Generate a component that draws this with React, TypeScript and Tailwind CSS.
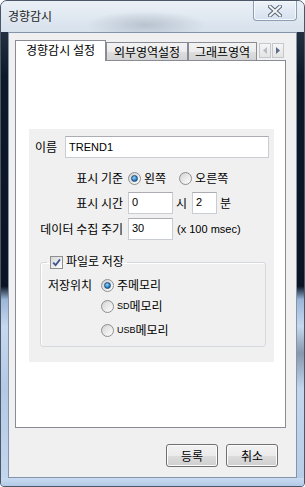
function Radio({ checked }: { checked?: boolean }) {
  return (
    <span className="flex h-[13px] w-[13px] shrink-0 items-center justify-center rounded-full border border-[#8e8f8f] bg-[linear-gradient(135deg,#cfcfcf,#ffffff)]">
      {checked ? (
        <span className="h-[7px] w-[7px] rounded-full border border-[#1d4e7c] bg-[radial-gradient(circle_at_40%_35%,#9ad6ff,#2b7fc0_60%,#15487a)]" />
      ) : (
        <span className="h-[9px] w-[9px] rounded-full bg-[linear-gradient(135deg,#d8d8d8,#fbfbfb)]" />
      )}
    </span>
  )
}

function CheckBox() {
  return (
    <span className="flex h-[13px] w-[13px] shrink-0 items-center justify-center border border-[#8e8f8f] bg-[linear-gradient(135deg,#d6d6d6,#ffffff)]">
      <svg width="9" height="9" viewBox="0 0 9 9">
        <path d="M1.2 4.6 L3.6 7.2 L8 1.4" stroke="#3e5592" strokeWidth="1.8" fill="none" />
      </svg>
    </span>
  )
}

function TextBox({ value, w, center }: { value: string; w: string; center?: boolean }) {
  return (
    <div
      className={`${w} flex h-[22px] shrink-0 border border-[#c9ccd3] border-t-[#abadb3] bg-white pl-[3px] font-['Liberation_Sans',sans-serif] text-[11px] leading-[13px] ${center ? "items-center" : "items-start pt-[3px]"}`}
    >
      {value}
    </div>
  )
}

function Tab({ label, selected, w }: { label: string; selected?: boolean; w: string }) {
  if (selected) {
    return (
      <div className={`${w} z-10 flex h-[21px] shrink-0 items-center justify-center border border-b-0 border-[#898c95] bg-white pb-[2px] text-[12px] leading-[12px]`}>
        {label}
      </div>
    )
  }
  return (
    <div className={`${w} flex h-[19px] shrink-0 items-center justify-center overflow-hidden whitespace-nowrap border border-b-0 border-[#898c95] bg-[linear-gradient(to_bottom,#f3f3f3_0%,#ebebeb_50%,#dedede_50%,#d2d2d2_100%)] pb-[1px] text-[12px] leading-[12px]`}>
      {label}
    </div>
  )
}

function ArrowButton({ dir }: { dir: "left" | "right" }) {
  return (
    <div className="mb-[3px] flex h-[15px] w-[12px] items-center justify-center border border-[#c4c7cc] bg-[linear-gradient(to_bottom,#f6f6f6,#e4e4e4)]">
      <svg width="4" height="7" viewBox="0 0 4 7">
        {dir === "left" ? (
          <path d="M4 0 L0 3.5 L4 7 Z" fill="#b8bcc4" />
        ) : (
          <path d="M0 0 L4 3.5 L0 7 Z" fill="#5c6b86" />
        )}
      </svg>
    </div>
  )
}

function Button({ label }: { label: string }) {
  return (
    <button className="flex h-[23px] w-[52px] items-center justify-center rounded-[3px] border border-[#707070] bg-[linear-gradient(to_bottom,#f2f2f2_0%,#ebebeb_50%,#dddddd_50%,#cfcfcf_100%)] text-[12px] leading-[12px] shadow-[inset_0_0_0_1px_#fbfbfb]">
      {label}
    </button>
  )
}

export default function App() {
  return (
    <div className="flex h-[487px] w-[305px] flex-col overflow-hidden rounded-t-[7px] rounded-b-[4px] border border-[#4b5668] bg-[#bfd3ec] font-['Noto_Sans_CJK_KR',sans-serif] text-black">
      {/* title bar */}
      <div className="flex h-[31px] shrink-0 items-start justify-between bg-[radial-gradient(ellipse_60px_14px_at_145px_24px,#b9c3cf,transparent),linear-gradient(to_bottom,#eaf0f6,#d7e1ec)]">
        <div className="pl-[7px] pt-[9px] text-[12px] leading-[12px] text-[#1e1e1e]">경향감시</div>
        <div className="mr-[7px] flex h-[20px] w-[44px] items-center justify-center rounded-b-[4px] border border-t-0 border-[#8e9db2] bg-[linear-gradient(to_bottom,#eef3f9,#d5e1ee)] shadow-[inset_0_0_0_1px_#f6f9fc]">
          <svg width="14" height="12" viewBox="0 0 14 12">
            <path d="M2 1.5 L12 10.5 M12 1.5 L2 10.5" stroke="#5b6676" strokeWidth="4" strokeLinecap="square" />
            <path d="M2 1.5 L12 10.5 M12 1.5 L2 10.5" stroke="#f4f6f8" strokeWidth="2" strokeLinecap="square" />
          </svg>
        </div>
      </div>

      <div className="flex h-[446px] shrink-0">
        <div className="w-[7px] bg-[linear-gradient(to_bottom,#24303f_0%,#0d1828_10%,#0a1424_57%,#9bb6d8_60%,#c5d8ef_66%,#b4c9e4_80%,#c2d6ee_100%)]" />

        {/* client area */}
        <div className="flex w-[289px] flex-col border border-[#8494aa] bg-[#f0f0f0] pl-[6px] pt-[7px]">
          {/* tab header */}
          <div className="-mb-px flex h-[21px] items-end">
            <Tab label="경향감시 설정" selected w="w-[91px]" />
            <Tab label="외부영역설정" w="w-[82px]" />
            <Tab label="그래프영역" w="w-[69px]" />
            <div className="ml-[2px] flex gap-[1px] self-end">
              <ArrowButton dir="left" />
              <ArrowButton dir="right" />
            </div>
          </div>

          {/* tab pane */}
          <div className="h-[368px] w-[271px] border border-[#898c95] bg-white pl-[13px] pt-[68px]">
            <div className="flex h-[233px] w-[245px] flex-col bg-[#f0f0f0] pl-[6px] pt-[7px] text-[12px] leading-[12px]">
              <div className="flex items-center">
                <span className="w-[30px] whitespace-nowrap">이름</span>
                <TextBox value="TREND1" w="w-[204px]" center />
              </div>

              <div className="mt-[10px] grid grid-cols-[88px_auto] items-center gap-x-[5px] gap-y-[4px]">
                <span className="h-[20px] text-right leading-[20px]">표시 기준</span>
                <div className="flex h-[20px] items-center">
                  <Radio checked />
                  <span className="ml-[3px]">왼쪽</span>
                  <span className="ml-[13px]">
                    <Radio />
                  </span>
                  <span className="ml-[3px]">오른쪽</span>
                </div>

                <span className="text-right">표시 시간</span>
                <div className="flex items-center">
                  <TextBox value="0" w="w-[45px]" />
                  <span className="ml-[3px]">시</span>
                  <span className="ml-[5px]">
                    <TextBox value="2" w="w-[25px]" />
                  </span>
                  <span className="ml-[3px]">분</span>
                </div>

                <span className="whitespace-nowrap text-right">데이터 수집 주기</span>
                <div className="flex items-center">
                  <TextBox value="30" w="w-[45px]" />
                  <span className="ml-[4px] font-['Liberation_Sans',sans-serif] text-[11px]">(x 100 msec)</span>
                </div>
              </div>

              <fieldset className="ml-[5px] mt-[15px] w-[226px] rounded-[3px] border border-[#d3d9df] pb-[8px] shadow-[inset_1px_1px_0_#ffffff]">
                <legend className="ml-[6px] flex items-center px-[3px]">
                  <CheckBox />
                  <span className="ml-[3px] pb-[3px]">파일로 저장</span>
                </legend>

                <div className="mt-[7px] grid grid-cols-[53px_auto] pl-[7px]">
                  <span className="flex h-[16px] items-center">저장위치</span>
                  <div className="flex h-[16px] items-center">
                    <Radio checked />
                    <span className="ml-[3px]">주메모리</span>
                  </div>

                  <span />
                  <div className="mt-[5px] flex h-[16px] items-center">
                    <Radio />
                    <span className="ml-[3px] font-['Liberation_Sans',sans-serif] text-[9px]">SD</span>
                    <span>메모리</span>
                  </div>

                  <span />
                  <div className="mt-[8px] flex h-[16px] items-center">
                    <Radio />
                    <span className="ml-[3px] font-['Liberation_Sans',sans-serif] text-[9px]">USB</span>
                    <span>메모리</span>
                  </div>
                </div>
              </fieldset>
            </div>
          </div>

          <div className="mt-[16px] flex justify-end gap-[8px] pr-[18px]">
            <Button label="등록" />
            <Button label="취소" />
          </div>
        </div>

        <div className="w-[7px] bg-[linear-gradient(to_bottom,#24303f_0%,#0d1828_10%,#0a1424_57%,#9bb6d8_60%,#c5d8ef_66%,#8797ac_72%,#c2d6ee_80%,#b8cde8_100%)]" />
      </div>

      <div className="flex-1 bg-[linear-gradient(to_bottom,#c8dbf1,#b3c9e6)]" />
    </div>
  )
}
